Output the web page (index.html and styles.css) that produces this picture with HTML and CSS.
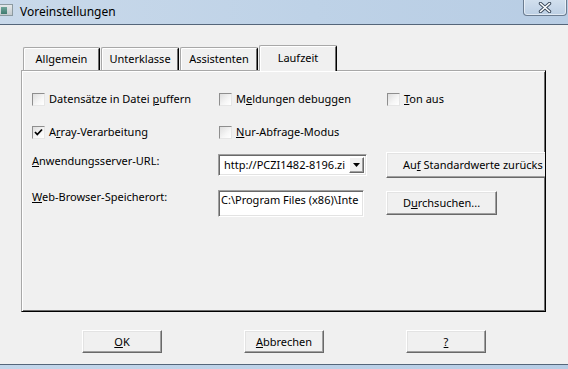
FILE: index.html
```html
<!DOCTYPE html>
<html lang="de">
<head>
<meta charset="utf-8">
<title>Voreinstellungen</title>
<link rel="stylesheet" href="styles.css">
</head>
<body>
<div class="window">
  <header class="titlebar">
    <span class="app-icon"><span class="app-icon-inner"></span></span>
    <span class="title">Voreinstellungen</span>
    <span class="close-btn">
      <svg width="14" height="11" viewBox="0 0 14 11">
        <path d="M2.5 1.5 L11.5 9.5 M11.5 1.5 L2.5 9.5" stroke="#3b4a5c" stroke-width="3.4" stroke-linecap="round" fill="none"/>
        <path d="M2.5 1.5 L11.5 9.5 M11.5 1.5 L2.5 9.5" stroke="#ffffff" stroke-width="1.6" stroke-linecap="round" fill="none"/>
      </svg>
    </span>
  </header>
  <main class="dialog">
    <nav class="tabs">
      <div class="tab tab-a">Allgemein</div>
      <div class="tab tab-b">Unterklasse</div>
      <div class="tab tab-b">Assistenten</div>
      <div class="tab active">Laufzeit</div>
    </nav>
    <section class="panel">
      <div class="row row-check1">
        <label class="check"><span class="box"></span><span class="text">Datensätze in Datei <u>p</u>uffern</span></label>
        <label class="check shifted"><span class="box"></span><span class="text">M<u>e</u>ldungen debuggen</span></label>
        <label class="check shifted"><span class="box"></span><span class="text"><u>T</u>on aus</span></label>
      </div>
      <div class="row row-check2">
        <label class="check"><span class="box"><svg width="11" height="11" viewBox="0 0 11 11"><path d="M2 5 L4.3 7.5 L9 2.5" stroke="#000" stroke-width="1.8" fill="none"/></svg></span><span class="text">A<u>r</u>ray-Verarbeitung</span></label>
        <label class="check shifted"><span class="box"></span><span class="text"><u>N</u>ur-Abfrage-Modus</span></label>
      </div>
      <div class="row row-url">
        <span class="label label-url"><u>A</u>nwendungsserver-URL:</span>
        <div class="combo">
          <span class="combo-text">http://PCZI1482-8196.zi</span>
          <span class="combo-arrow"><svg width="7" height="4" viewBox="0 0 7 4"><path d="M0 0 H7 L3.5 4 Z" fill="#000"/></svg></span>
        </div>
        <span class="btn btn-reset"><span class="btn-label">Au<u>f</u> Standardwerte zurücks</span></span>
      </div>
      <div class="row row-path">
        <span class="label label-path"><u>W</u>eb-Browser-Speicherort:</span>
        <div class="field"><span class="field-text">C:\Program Files (x86)\Inte</span></div>
        <span class="btn btn-browse"><span class="btn-label">D<u>u</u>rchsuchen...</span></span>
      </div>
    </section>
    <footer class="buttons">
      <span class="btn btn-foot"><span class="btn-label"><u>O</u>K</span></span>
      <span class="btn btn-foot"><span class="btn-label"><u>A</u>bbrechen</span></span>
      <span class="btn btn-foot"><span class="btn-label"><u>?</u></span></span>
    </footer>
  </main>
  <div class="frame-bottom"></div>
</div>
</body>
</html>
```

FILE: styles.css
```css
* { box-sizing: border-box; }

html, body {
  margin: 0;
  padding: 0;
}

body {
  background: #f0f0f0;
  font-family: "Noto Sans", "DejaVu Sans", sans-serif;
  font-size: 11px;
  color: #000;
}

u { text-decoration: underline; text-underline-offset: 1px; }

.window {
  width: 568px;
  height: 369px;
  display: flex;
  flex-direction: column;
  overflow: hidden;
}

/* ---------- title bar ---------- */
.titlebar {
  height: 25px;
  flex: none;
  display: flex;
  align-items: flex-start;
  background: linear-gradient(to right, #c9d9ea 0%, #bed2e7 55%, #b8cde4 100%);
  border-bottom: 1px solid #55667a;
}

.app-icon {
  width: 13px;
  height: 12px;
  margin-top: 4px;
  background: linear-gradient(#e4e8ea, #c3cacd);
  border: 1px solid #8c9aa0;
  border-left: none;
  display: flex;
  align-items: center;
}

.app-icon-inner {
  width: 6px;
  height: 7px;
  margin-left: 1px;
  background: linear-gradient(#6fa59a, #3f7a6f);
}

.title {
  margin-left: 7px;
  margin-top: 3px;
  font-size: 12px;
  line-height: 17px;
  color: #000;
}

.close-btn {
  margin-left: auto;
  margin-right: 1px;
  margin-top: -1px;
  width: 44px;
  height: 17px;
  border: 1px solid #6b7c90;
  border-top: none;
  border-radius: 0 0 4px 4px;
  background: linear-gradient(#d3e0ee, #bccfe4);
  box-shadow: inset 0 0 0 1px rgba(255,255,255,0.55);
  display: flex;
  align-items: center;
  justify-content: center;
}

/* ---------- dialog body ---------- */
.dialog {
  display: flex;
  flex-direction: column;
}

.tabs {
  margin-top: 20px;
  margin-left: 23px;
  height: 26px;
  margin-bottom: -1px;
  display: flex;
  align-items: flex-end;
  gap: 1px;
  position: relative;
  z-index: 1;
}

.tab {
  height: 23px;
  margin-bottom: 1px;
  display: flex;
  align-items: center;
  justify-content: center;
  background: #f0f0f0;
  border-top: 1px solid #a8a8a8;
  border-left: 1px solid #a8a8a8;
  border-right: 1px solid #000;
  border-radius: 2px 2px 0 0;
  box-shadow: inset 1px 1px #fff, inset -1px 0 #6e6e6e;
  line-height: 14px;
}

.tab-a { width: 77px; }
.tab-b { width: 78px; }

.tab.active {
  width: 78px;
  height: 26px;
  margin-bottom: 0;
  padding-bottom: 2px;
}

.panel {
  margin-left: 21px;
  width: 525px;
  height: 242px;
  border-top: 1px solid #a8a8a8;
  border-left: 1px solid #a8a8a8;
  border-right: 1px solid #000;
  border-bottom: 1px solid #000;
  box-shadow: inset 1px 1px #fff, inset -1px -1px #6e6e6e;
  padding: 21px 0 0 10px;
  overflow: hidden;
}

.row {
  display: grid;
  grid-template-columns: 186px 168px 200px;
  align-items: center;
}

.row-check1 { height: 13px; }
.row-check2 { height: 13px; margin-top: 20px; }
.row-url { height: 26px; margin-top: 14px; }
.row-path { height: 27px; margin-top: 12px; align-items: start; }

.check {
  display: flex;
  align-items: center;
  white-space: nowrap;
}

.check.shifted { margin-left: 1px; }

.box {
  width: 13px;
  height: 13px;
  flex: none;
  border: 1px solid;
  border-color: #8e8e8e #e6e6e6 #e6e6e6 #8e8e8e;
  background: linear-gradient(135deg, #dedede 0%, #f6f6f6 60%, #ffffff 100%);
  display: flex;
  align-items: center;
  justify-content: center;
}

.text {
  margin-left: 4px;
  line-height: 14px;
}

.label {
  align-self: start;
  line-height: 16px;
  white-space: nowrap;
}

.label-url { margin-top: 1px; }
.label-path { margin-top: -1px; }

.combo {
  width: 149px;
  height: 22px;
  background: #fff;
  border: 1px solid;
  border-color: #a0a0a0 #fff #fff #a0a0a0;
  box-shadow: inset 1px 1px #696969, inset -1px -1px #e3e3e3;
  display: flex;
  align-items: stretch;
  padding: 2px;
}

.combo-text {
  flex: 1;
  overflow: hidden;
  white-space: nowrap;
  padding-left: 3px;
  line-height: 16px;
}

.combo-arrow {
  width: 15px;
  flex: none;
  background: #f0f0f0;
  border: 1px solid;
  border-color: #fff #696969 #696969 #fff;
  box-shadow: inset -1px -1px #a0a0a0;
  display: flex;
  align-items: center;
  justify-content: center;
}

.field {
  width: 146px;
  height: 27px;
  background: #fff;
  border: 1px solid;
  border-color: #a0a0a0 #fff #fff #a0a0a0;
  box-shadow: inset 1px 1px #696969, inset -1px -1px #e3e3e3;
  padding: 1px 0 0 2px;
  overflow: hidden;
}

.field-text {
  display: block;
  white-space: nowrap;
  line-height: 16px;
}

.btn {
  display: flex;
  align-items: center;
  justify-content: center;
  background: #f0f0f0;
  border: 1px solid;
  border-color: #fff #696969 #696969 #fff;
  box-shadow: inset -1px -1px #a0a0a0, inset 1px 1px #e3e3e3;
  white-space: nowrap;
  line-height: 14px;
}

.btn-label { white-space: nowrap; }

.btn-reset {
  width: 175px;
  height: 26px;
  justify-content: flex-start;
  padding-left: 16px;
}

.btn-browse {
  width: 111px;
  height: 24px;
  margin-top: 1px;
}

.buttons {
  margin-top: 18px;
  padding-left: 82px;
  display: flex;
  gap: 82px;
}

.btn-foot {
  width: 80px;
  height: 23px;
}

.frame-bottom {
  margin-top: auto;
  height: 5px;
  flex: none;
  border-top: 1px solid #55667a;
  background: linear-gradient(to right, #c3d6ea, #b7cde5);
}
```
